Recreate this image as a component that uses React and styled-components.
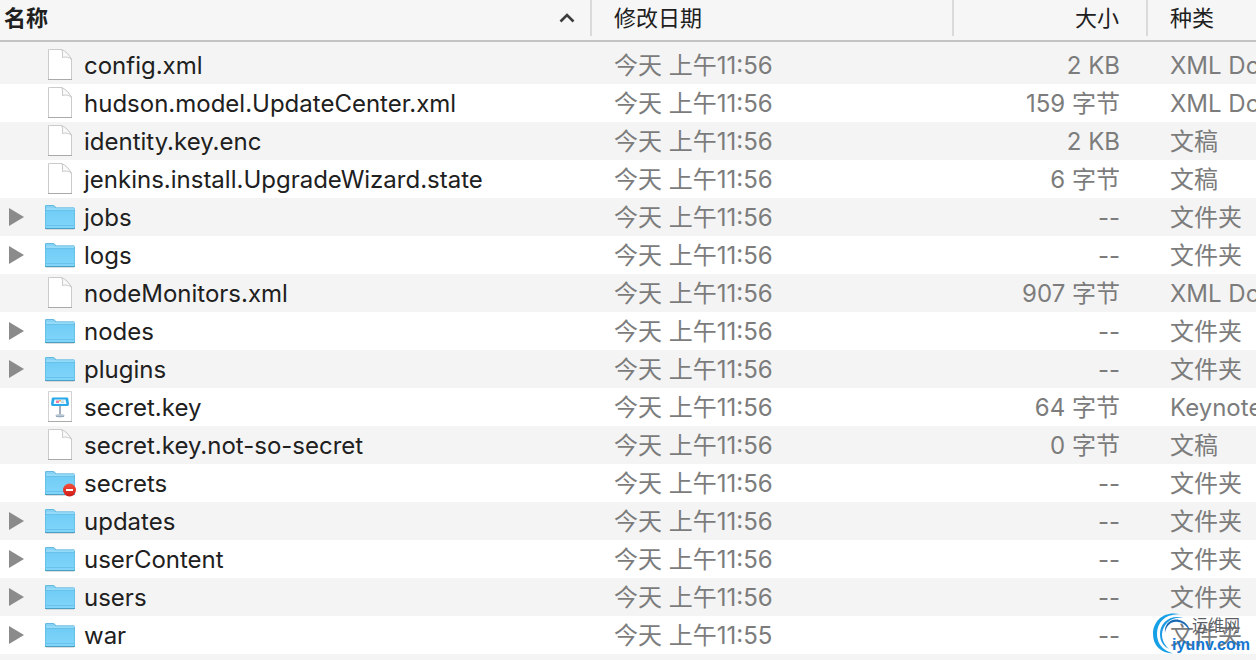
import React from "react";
import styled, { createGlobalStyle } from "styled-components";

const GlobalStyle = createGlobalStyle`
  * { box-sizing: border-box; }
  body {
    margin: 0;
    background: #fff;
    font-family: Inter, "Noto Sans CJK SC", sans-serif;
    color: #202020;
  }
`;

const Browser = styled.main`
  position: relative;
  overflow: hidden;
`;

const FileTable = styled.table`
  width: 100%;
  table-layout: fixed;
  border-collapse: separate;
  border-spacing: 0;
`;

const Column = styled.col`
  width: ${(p) => p.$width};
`;

const HeadCell = styled.th`
  padding: 0 0 4px;
  background: #f6f6f6;
  border-bottom: 2px solid #c3c3c3;
  font-weight: 400;
`;

const SortButton = styled.button`
  display: flex;
  align-items: center;
  justify-content: ${(p) => p.$justify || "flex-start"};
  width: 100%;
  height: 36px;
  padding: ${(p) => p.$padding};
  border: 0;
  border-right: ${(p) => (p.$last ? "0" : "2px solid #dadada")};
  background: none;
  color: inherit;
  font: inherit;
  font-weight: ${(p) => (p.$active ? 700 : 400)};
  font-size: 22px;
  line-height: 36px;
  white-space: nowrap;
`;

const Row = styled.tr`
  background: #fff;
  &:nth-child(odd) { background: #f4f4f4; }
  &:first-child > td { padding-top: 4px; }
`;

const Cell = styled.td`
  padding: 0 ${(p) => p.$right || "0"} 0 ${(p) => p.$left || "0"};
  overflow: hidden;
  color: #7c7c7c;
  font-size: 24px;
  text-align: ${(p) => p.$align || "left"};
  white-space: nowrap;
`;

const Label = styled.div`
  padding-top: 2px;
  line-height: 36px;
`;

const NameLine = styled.div`
  display: flex;
  align-items: center;
  height: 38px;
  color: #202020;
`;

const ToggleSlot = styled.span`
  display: flex;
  flex: none;
  width: 44px;
  padding-left: 8px;
`;

const Toggle = styled.button`
  display: flex;
  padding: 0;
  border: 0;
  background: none;
`;

const IconSlot = styled.span`
  display: flex;
  flex: none;
  justify-content: center;
  width: 32px;
  margin-right: 8px;
`;

const Footer = styled.div`
  height: 6px;
  background: #f4f4f4;
`;

const Watermark = styled.div`
  position: absolute;
  right: 6px;
  bottom: 4px;
  display: flex;
  width: 98px;
  height: 43px;
`;

const Swirl = styled.svg`
  flex: none;
  width: 42px;
  height: 42px;
`;

const WatermarkText = styled.div`
  display: flex;
  flex-direction: column;
  align-items: flex-end;
  width: 78px;
  margin-left: -22px;
`;

const SiteName = styled.span`
  padding-right: 10px;
  color: #5c6066;
  font-size: 16px;
  line-height: 24px;
`;

const SiteUrl = styled.span`
  color: #1478d2;
  font: 700 16px/16px "Liberation Sans", sans-serif;
`;

function FileIcon() {
  return (
    <svg width="26" height="34" viewBox="0 0 26 34" aria-hidden="true">
      <path d="M2.500 1.500H14.500Q20 4 24.500 11V31.500H1.500V1.500Z" fill="#fff" stroke="#cbcbcb" />
      <path d="M1 31.500H25" stroke="#aaa" />
      <path d="M14.500 1.500C16 3.500 15.500 6 15.500 9.500C19 8.500 22 9 24.500 11.500C22.500 7 18.500 3 14.500 1.500Z" fill="#fafafa" stroke="#c9c9c9" />
    </svg>
  );
}

function FolderIcon({ locked }) {
  return (
    <svg width="32" height="28" viewBox="0 0 32 28" aria-hidden="true">
      <defs>
        <linearGradient id="folderFace" x1="0" y1="0" x2="0" y2="1">
          <stop offset="0" stopColor="#70cdf6" />
          <stop offset="1" stopColor="#82d5fa" />
        </linearGradient>
        <linearGradient id="badgeFace" x1="0" y1="0" x2="0" y2="1">
          <stop offset="0" stopColor="#f5503e" />
          <stop offset="1" stopColor="#ce1b16" />
        </linearGradient>
      </defs>
      <path d="M1 3Q1 2 2 2H9Q10 2 11 3L12.5 4.5H30Q31 4.500 31 5.500V25H1Z" fill="#86d3f6" />
      <path d="M1.500 7V3Q1.500 2.500 2.500 2.500H9Q10 2.500 10.500 3.500L12 5H30" fill="none" stroke="#65b8dd" />
      <path d="M2 6H30" stroke="#a5e2fc" />
      <path d="M1 7.500H31V25Q31 26 30 26H2Q1 26 1 25Z" fill="url(#folderFace)" />
      <path d="M1.500 7V25M30.500 6V25M1 7.500H31M2 22.500H30" fill="none" stroke="#60bae3" strokeWidth=".7" />
      <path d="M1 25.500H31" stroke="#4b9fc5" />
      <path d="M2 26.500H30" stroke="#c5c9cb" strokeWidth=".6" />
      {locked && (
        <>
          <circle cx="25.500" cy="21" r="6.500" fill="url(#badgeFace)" />
          <rect x="22" y="20" width="7" height="2" fill="#fff" />
        </>
      )}
    </svg>
  );
}

function KeynoteIcon() {
  return (
    <svg width="26" height="34" viewBox="0 0 26 34" aria-hidden="true">
      <path d="M1.500 1.500H24.500V31.500H1.500Z" fill="#fff" stroke="#d2d2d2" />
      <path d="M1 31.500H25" stroke="#aaa" />
      <path d="M12 16H14V25H12Z" fill="#a4afbd" />
      <ellipse cx="13" cy="25.500" rx="4.500" ry="1.500" fill="#b9c7d4" />
      <path d="M9 26.300Q13 27.600 17 26.300" fill="none" stroke="#7890a5" strokeWidth=".7" />
      <path d="M6 7.500H20Q21 7.500 21.200 8.500L22 14Q22 16 20.500 16H5.500Q4 16 4 14L4.800 8.500Q5 7.500 6 7.500Z" fill="#29a8e8" />
      <path d="M7.500 9.500H18.500L19.500 14H6.500Z" fill="#eefaff" />
      <path d="M9 10.500H12V13H9Z" fill="#ed7ba8" />
      <path d="M12 10H14V11.500H12Z" fill="#f2b257" />
      <path d="M14 11H17M14 12.500H17" stroke="#9fc7df" strokeWidth=".8" />
    </svg>
  );
}

const ICONS = {
  file: <FileIcon />,
  folder: <FolderIcon />,
  locked: <FolderIcon locked />,
  keynote: <KeynoteIcon />,
};

const FILES = [
  ["config.xml", "file", "2 KB", "XML Document"],
  ["hudson.model.UpdateCenter.xml", "file", "159 字节", "XML Document"],
  ["identity.key.enc", "file", "2 KB", "文稿"],
  ["jenkins.install.UpgradeWizard.state", "file", "6 字节", "文稿"],
  ["jobs", "folder", "--", "文件夹"],
  ["logs", "folder", "--", "文件夹"],
  ["nodeMonitors.xml", "file", "907 字节", "XML Document"],
  ["nodes", "folder", "--", "文件夹"],
  ["plugins", "folder", "--", "文件夹"],
  ["secret.key", "keynote", "64 字节", "Keynote"],
  ["secret.key.not-so-secret", "file", "0 字节", "文稿"],
  ["secrets", "locked", "--", "文件夹"],
  ["updates", "folder", "--", "文件夹"],
  ["userContent", "folder", "--", "文件夹"],
  ["users", "folder", "--", "文件夹"],
  ["war", "folder", "--", "文件夹", "今天 上午11:55"],
];

function FileRow({ name, icon, size, kind, date = "今天 上午11:56" }) {
  return (
    <Row>
      <Cell>
        <NameLine>
          <ToggleSlot>
            {icon === "folder" && (
              <Toggle type="button" aria-label={name} aria-expanded="false">
                <svg width="17" height="20" viewBox="0 0 17 20" aria-hidden="true">
                  <path d="M1 1L16 10L1 19Z" fill="#8b8b8b" />
                </svg>
              </Toggle>
            )}
          </ToggleSlot>
          <IconSlot>{ICONS[icon]}</IconSlot>
          <Label>{name}</Label>
        </NameLine>
      </Cell>
      <Cell $left="22px"><Label>{date}</Label></Cell>
      <Cell $right="28px" $align="right"><Label>{size}</Label></Cell>
      <Cell $left="22px"><Label>{kind}</Label></Cell>
    </Row>
  );
}

export default function App() {
  return (
    <Browser>
      <GlobalStyle />
      <FileTable>
        <colgroup>
          <Column $width="auto" />
          <Column $width="362px" />
          <Column $width="194px" />
          <Column $width="108px" />
        </colgroup>
        <thead>
          <tr>
            <HeadCell scope="col" aria-sort="ascending">
              <SortButton type="button" $active $justify="space-between" $padding="0 15px 0 4px">
                名称
                <svg width="16" height="12" viewBox="0 0 16 12" aria-hidden="true">
                  <path d="M1.500 9.500L8 3L14.500 9.500" fill="none" stroke="#3c3c3c" strokeWidth="2.600" />
                </svg>
              </SortButton>
            </HeadCell>
            <HeadCell scope="col">
              <SortButton type="button" $padding="0 22px">修改日期</SortButton>
            </HeadCell>
            <HeadCell scope="col">
              <SortButton type="button" $justify="flex-end" $padding="0 27px">大小</SortButton>
            </HeadCell>
            <HeadCell scope="col">
              <SortButton type="button" $padding="0 22px" $last>种类</SortButton>
            </HeadCell>
          </tr>
        </thead>
        <tbody>
          {FILES.map(([name, icon, size, kind, date]) => (
            <FileRow key={name} name={name} icon={icon} size={size} kind={kind} date={date} />
          ))}
        </tbody>
      </FileTable>
      <Footer />
      <Watermark>
        <Swirl viewBox="0 0 42 42" aria-hidden="true">
          <path d="M29 1.500C13-3 1 7 1 21C1 33 9 40 21 40.500C10 37 5 30 5 21C5 9 14 0 29 1.500Z" fill="#16a0e6" />
          <path d="M32 5C18 1 8 10 8 21C8 28 11 33 17 36C12 31 10 27 10 21C11 11 19 3 32 5Z" fill="#1b9be4" />
          <path d="M13 20C12 11 19 5 27 7C33 8 37 13 38 18C34 12 31 9.500 26 9C19 8 14 13 13 20Z" fill="#1668b4" />
        </Swirl>
        <WatermarkText>
          <SiteName>运维网</SiteName>
          <SiteUrl>iyunv.com</SiteUrl>
        </WatermarkText>
      </Watermark>
    </Browser>
  );
}
